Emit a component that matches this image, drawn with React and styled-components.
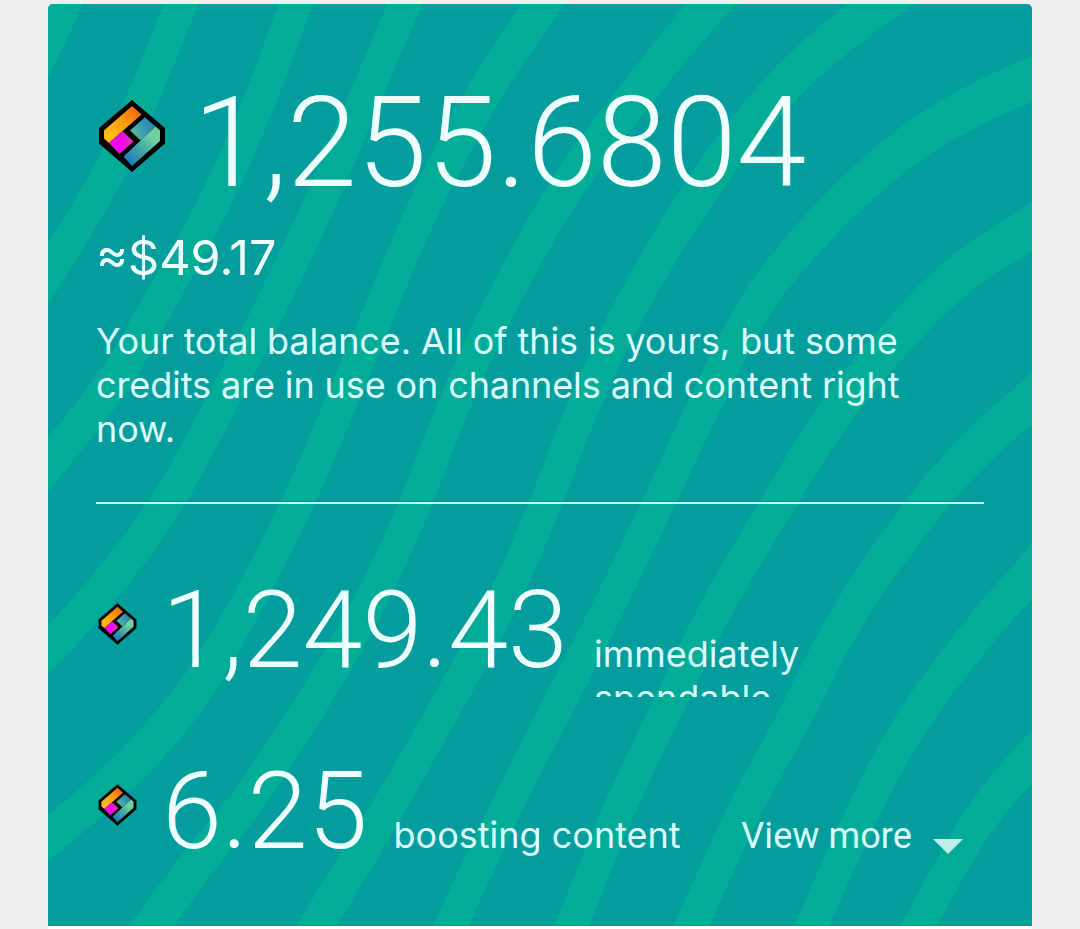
import React, { useId } from "react";
import styled, { createGlobalStyle } from "styled-components";

const GlobalStyle = createGlobalStyle`
  * {
    box-sizing: border-box;
  }
  body {
    margin: 0;
    background-color: #eeeeee;
  }
`;

// centre line of every wave, as [x, y, thickness]
const waves = [
  [[80, -34, 32], [65, 4, 32], [48, 42, 32], [22, 92, 32]],
  [[196, -34, 32], [181, 4, 32], [142, 100, 32], [109, 172, 32], [48, 274, 33], [20, 314, 33]],
  [[312, -34, 32], [296, 4, 32], [260, 100, 32], [213, 205, 32], [155, 310, 33], [114, 380, 34], [48, 465, 34], [16, 502, 34]],
  [[424, -34, 32], [405, 4, 32], [364, 100, 32], [318, 207, 32], [269, 310, 32], [219, 408, 32], [167, 502, 33], [104, 588, 34], [48, 650, 34], [14, 684, 34]],
  [[568, -34, 36], [543, 4, 36], [500, 67, 35], [458, 140, 34], [418, 220, 32], [380, 310, 32], [340, 405, 32], [298, 502, 32], [254, 590, 32], [205, 675, 34], [168, 725, 36], [118, 778, 36], [48, 838, 36], [14, 862, 36]],
  [[752, -34, 37], [711, 4, 37], [636, 95, 36], [567, 187, 34], [498, 310, 33], [452, 410, 32], [416, 502, 32], [375, 592, 32], [321, 688, 33], [250, 797, 34], [204, 855, 35], [152, 925, 36], [125, 962, 36]],
  [[930, -30, 40], [880, 4, 39], [816, 55, 38], [767, 104, 37], [703, 187, 35], [629, 310, 33], [582, 410, 32], [546, 502, 32], [501, 605, 32], [438, 720, 32], [388, 808, 33], [317, 925, 35], [296, 962, 35]],
  [[1075, 62, 42], [1032, 79, 42], [979, 103, 41], [912, 143, 39], [845, 200, 37], [788, 262, 35], [753, 310, 34], [702, 410, 33], [659, 502, 32], [608, 608, 32], [548, 725, 32], [504, 812, 32], [451, 925, 32], [434, 962, 32]],
  [[1075, 203, 42], [1032, 227, 42], [970, 267, 40], [922, 310, 38], [840, 406, 36], [779, 502, 34], [714, 613, 33], [660, 723, 32], [618, 812, 32], [572, 925, 32], [556, 962, 32]],
  [[1070, 368, 40], [1032, 399, 40], [985, 440, 38], [928, 502, 37], [848, 616, 35], [789, 728, 34], [742, 815, 33], [692, 925, 33], [676, 962, 33]],
  [[1068, 530, 38], [1032, 572, 37], [989, 620, 36], [916, 716, 34], [865, 808, 33], [812, 925, 32], [796, 962, 32]],
  [[1068, 718, 37], [1032, 757, 37], [998, 795, 35], [966, 841, 33], [919, 925, 32], [900, 962, 32]],
];

// joins the points with curves whose handles follow the neighbouring points
const smooth = (points) => {
  const heading = (i) => {
    const a = points[Math.max(i - 1, 0)];
    const b = points[Math.min(i + 1, points.length - 1)];
    const length = Math.hypot(b[0] - a[0], b[1] - a[1]);
    return [(b[0] - a[0]) / length, (b[1] - a[1]) / length];
  };
  return points
    .slice(0, -1)
    .map((p, i) => {
      const next = points[i + 1];
      const reach = Math.hypot(next[0] - p[0], next[1] - p[1]) / 3;
      const from = heading(i);
      const to = heading(i + 1);
      const c1 = [p[0] + from[0] * reach, p[1] + from[1] * reach];
      const c2 = [next[0] - to[0] * reach, next[1] - to[1] * reach];
      return `C${c1} ${c2} ${next}`;
    })
    .join(" ");
};

const ribbon = (wave) => {
  const edge = (side) =>
    wave.map(([x, y, width], i) => {
      const a = wave[i - 1] || wave[i];
      const b = wave[i + 1] || wave[i];
      const dx = b[0] - a[0];
      const dy = b[1] - a[1];
      const k = ((width / 2) * side) / Math.hypot(dx, dy);
      return [x - dy * k, y + dx * k];
    });
  const left = edge(1);
  const right = edge(-1).reverse();
  return `M${left[0]} ${smooth(left)} L${right[0]} ${smooth(right)} Z`;
};

const Waves = () => (
  <WavesSvg viewBox="48 4 984 922" aria-hidden="true">
    {waves.map((wave, i) => (
      <path key={i} d={ribbon(wave)} />
    ))}
  </WavesSvg>
);

const CreditsIcon = ({ large }) => {
  const id = useId();
  return (
    <IconSvg $large={large} viewBox="0 0 68 72" aria-hidden="true">
      <defs>
        <linearGradient id={`${id}orange`} x1="0" y1="1" x2="1" y2="0">
          <stop offset="0.2" stopColor="#ffbd14" />
          <stop offset="0.5" stopColor="#fda010" />
          <stop offset="1" stopColor="#ee5b12" />
        </linearGradient>
        <linearGradient id={`${id}pink`} x1="0" y1="0.5" x2="1" y2="0.5">
          <stop offset="0.55" stopColor="#ee08ee" />
          <stop offset="1" stopColor="#e0409c" />
        </linearGradient>
        <linearGradient id={`${id}teal`} x1="0" y1="0.7" x2="1" y2="0.3">
          <stop offset="0" stopColor="#5dba9f" />
          <stop offset="1" stopColor="#1c7fb4" />
        </linearGradient>
        <linearGradient id={`${id}green`} x1="0.2" y1="1" x2="0.9" y2="0.1">
          <stop offset="0" stopColor="#1679bd" />
          <stop offset="0.55" stopColor="#4fb0a4" />
          <stop offset="0.8" stopColor="#6fd0a0" />
        </linearGradient>
      </defs>
      <path d="M34 0L67 28V43.5L34 72L1 43.5V28Z" fill="#000" />
      <path d="M34 6L43.5 14.5L11 43L6 38.5V30.5Z" fill={`url(#${id}orange)`} />
      <path d="M24.5 31.3L35.5 41.5L21.5 54L11 43Z" fill={`url(#${id}pink)`} />
      <path d="M47 17.3L57.5 26.5L42.7 40.5L32 30.5Z" fill={`url(#${id}teal)`} />
      <path d="M57.5 26.5L62 30.5V41L34 66L25.5 56.5Z" fill={`url(#${id}green)`} />
    </IconSvg>
  );
};

const App = () => {
  return (
    <>
      <GlobalStyle />
      <Page>
        <Card>
          <Waves />
          <Content>
            <Total>
              <CreditsIcon large />
              <Amount $large>1,255.6804</Amount>
            </Total>
            <Fiat>≈$49.17</Fiat>
            <Description>
              Your total balance. All of this is yours, but some credits are in use on channels and content right now.
            </Description>
            <Divider />
            <Row>
              <CreditsIcon />
              <Amount>1,249.43</Amount>
              <Label $wrap>immediately spendable</Label>
            </Row>
            <Row>
              <CreditsIcon />
              <Amount>6.25</Amount>
              <Label>boosting content</Label>
              <ViewMore type="button">
                View more
                <Caret />
              </ViewMore>
            </Row>
          </Content>
        </Card>
      </Page>
    </>
  );
};

const Page = styled.main`
  width: 984px;
  height: 929px;
  margin: 0 auto;
  padding-top: 4px;
  background: linear-gradient(#eeeeee 0 50%, #ffffff 50%);
  overflow: hidden;
`;

const Card = styled.section`
  position: relative;
  height: 922px;
  padding: 64px 48px 0;
  border-radius: 5px 5px 0 0;
  background-color: #029d9c;
  color: #f0ffff;
  font-family: Inter, "Liberation Sans", sans-serif;
  overflow: hidden;
`;

const WavesSvg = styled.svg`
  position: absolute;
  inset: 0;
  width: 100%;
  height: 100%;
  fill: #02ad98;
`;

const Content = styled.div`
  position: relative;
`;

const IconSvg = styled.svg`
  flex: none;
  align-self: flex-start;
  width: ${({ $large }) => ($large ? 68 : 39)}px;
  height: ${({ $large }) => ($large ? 72 : 42)}px;
  margin-top: ${({ $large }) => ($large ? 32 : 37)}px;
  margin-left: ${({ $large }) => ($large ? 2 : 1.5)}px;
`;

const Amount = styled.span`
  flex: none;
  margin-left: ${({ $large }) => ($large ? 27 : 25.5)}px;
  font-family: Roboto, "Liberation Sans", sans-serif;
  font-size: ${({ $large }) => ($large ? 126 : 108)}px;
  font-weight: 300;
  line-height: ${({ $large }) => ($large ? 150 : 128)}px;
`;

const Total = styled.div`
  display: flex;
  height: 160px;
`;

const Fiat = styled.div`
  font-size: 48.5px;
  line-height: 60px;
`;

const Description = styled.p`
  margin: 31px 0 51px;
  font-size: 36px;
  letter-spacing: -0.11px;
  line-height: 44px;
  color: #dcffff;
`;

const Divider = styled.hr`
  height: 2px;
  margin: 0 0 62px;
  border: 0;
  background-color: #c8fbfa;
`;

const Row = styled.div`
  display: flex;
  align-items: baseline;
  height: 131px;
  margin-bottom: 50px;
  overflow: hidden;
`;

const Label = styled.span`
  flex: none;
  width: ${({ $wrap }) => ($wrap ? "240px" : "auto")};
  margin-left: 26px;
  font-size: 36px;
  line-height: 44px;
  color: #dcffff;
`;

const ViewMore = styled.button`
  display: flex;
  align-items: baseline;
  gap: 21px;
  margin: 0 21px 0 auto;
  padding: 0;
  border: 0;
  background: none;
  color: #dcffff;
  font-family: Roboto, "Liberation Sans", sans-serif;
  font-size: 36px;
  letter-spacing: 0.1px;
  line-height: 44px;
  white-space: nowrap;
`;

const Caret = styled.span`
  align-self: flex-end;
  margin-bottom: 4px;
  border: 15px solid transparent;
  border-top-color: #bfede7;
  border-bottom: 0;
`;

export default App;
